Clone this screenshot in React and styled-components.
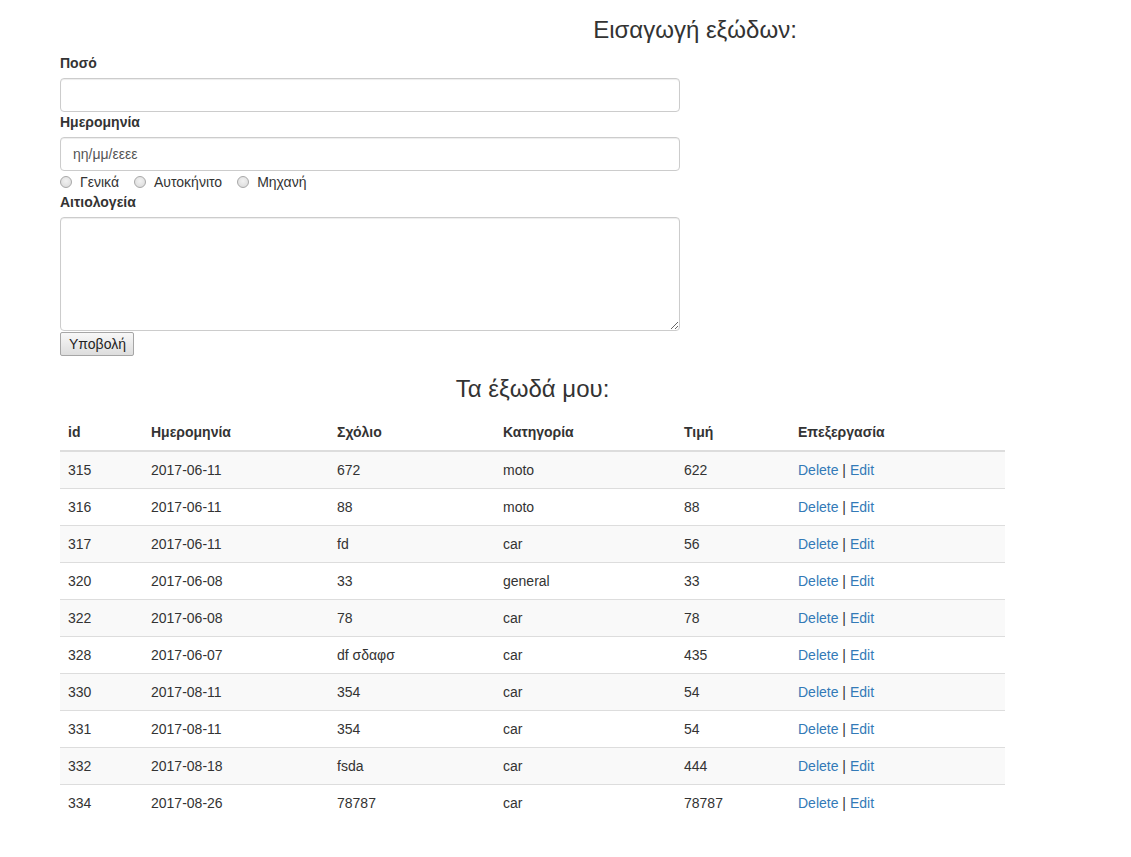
import React from 'react'
import styled, { createGlobalStyle } from 'styled-components'

const GlobalStyle = createGlobalStyle`
    html, body {
        margin: 0;
        padding: 0;
        background: #fff;
    }
    body {
        font-family: "Liberation Sans", Arial, Helvetica, sans-serif;
        font-size: 14px;
        line-height: 20px;
        color: #333;
    }
    * {
        box-sizing: border-box;
    }
`

const Page = styled.div`
    width: 945px;
    margin-left: 60px;
    padding-bottom: 30px;
`

const Title = styled.h3`
    margin: ${props => (props.first ? '17px' : '20px')} 0 10px;
    padding-left: ${props => props.shift || 0}px;
    font-size: 24px;
    font-weight: 500;
    line-height: 26px;
    text-align: center;
    color: #333;
`

const Form = styled.form`
    width: 620px;
`

const Label = styled.label`
    display: inline-block;
    margin-bottom: 5px;
    font-weight: bold;
`

const Input = styled.input`
    display: block;
    width: 100%;
    height: 34px;
    padding: 6px 12px;
    font-family: inherit;
    font-size: 14px;
    color: #555;
    background: #fff;
    border: 1px solid #ccc;
    border-radius: 4px;
    box-shadow: inset 0 1px 1px rgba(0, 0, 0, 0.075);
    outline: none;
    &::placeholder {
        color: #555;
    }
`

const Textarea = styled.textarea`
    display: block;
    width: 100%;
    height: 114px;
    padding: 6px 12px;
    font-family: inherit;
    font-size: 14px;
    border: 1px solid #ccc;
    border-radius: 4px;
    box-shadow: inset 0 1px 1px rgba(0, 0, 0, 0.075);
    outline: none;
    resize: vertical;
`

const RadioRow = styled.div`
    display: flex;
    align-items: center;
    height: 20px;
    margin-top: 1px;
`

const RadioLabel = styled.label`
    display: flex;
    align-items: center;
    margin-right: 15px;
    color: #333;
`

const Radio = styled.input`
    appearance: none;
    width: 12px;
    height: 12px;
    margin: 0 8px 0 0;
    border: 1px solid #a8a8a8;
    border-radius: 50%;
    background: radial-gradient(circle at 50% 40%, #f2f2f2 0%, #d8d8d8 100%);
`

const Submit = styled.button`
    display: block;
    margin-top: 1px;
    height: 24px;
    padding: 0 7px 0 8px;
    font-family: inherit;
    font-size: 14px;
    color: #222;
    border: 1px solid #a6a6a6;
    border-radius: 2px;
    background: linear-gradient(#f8f8f8, #dddddd);
`

const Table = styled.table`
    width: 100%;
    border-collapse: collapse;
    border-spacing: 0;
`

const Th = styled.th`
    padding: 10px 8px 8px;
    text-align: left;
    font-weight: bold;
    line-height: 20px;
    border-bottom: 2px solid #ddd;
    width: ${props => props.w}px;
`

const Row = styled.tr`
    background: ${props => (props.striped ? '#f9f9f9' : '#fff')};
`

const Td = styled.td`
    padding: 8px;
    line-height: 20px;
    height: 37px;
    border-top: ${props => (props.first ? 'none' : '1px solid #ddd')};
`

const Link = styled.a`
    color: #337ab7;
    text-decoration: none;
`

const columns = [
    { name: 'id', w: 83 },
    { name: 'Ημερομηνία', w: 186 },
    { name: 'Σχόλιο', w: 166 },
    { name: 'Κατηγορία', w: 181 },
    { name: 'Τιμή', w: 114 },
    { name: 'Επεξεργασία', w: 215 },
]

const expenses = [
    [315, '2017-06-11', '672', 'moto', '622'],
    [316, '2017-06-11', '88', 'moto', '88'],
    [317, '2017-06-11', 'fd', 'car', '56'],
    [320, '2017-06-08', '33', 'general', '33'],
    [322, '2017-06-08', '78', 'car', '78'],
    [328, '2017-06-07', 'df σδαφσ', 'car', '435'],
    [330, '2017-08-11', '354', 'car', '54'],
    [331, '2017-08-11', '354', 'car', '54'],
    [332, '2017-08-18', 'fsda', 'car', '444'],
    [334, '2017-08-26', '78787', 'car', '78787'],
]

const App = () => (
    <Page>
        <GlobalStyle />
        <Title first shift={325}>Εισαγωγή εξώδων:</Title>
        <Form onSubmit={e => e.preventDefault()}>
            <Label>Ποσό</Label>
            <Input type="text" />
            <Label>Ημερομηνία</Label>
            <Input type="text" placeholder="ηη/μμ/εεεε" />
            <RadioRow>
                <RadioLabel><Radio type="radio" name="cat" />Γενικά</RadioLabel>
                <RadioLabel><Radio type="radio" name="cat" />Αυτοκήνιτο</RadioLabel>
                <RadioLabel><Radio type="radio" name="cat" />Μηχανή</RadioLabel>
            </RadioRow>
            <Label>Αιτιολογεία</Label>
            <Textarea />
            <Submit type="submit">Υποβολή</Submit>
        </Form>
        <Title>Τα έξωδά μου:</Title>
        <Table>
            <thead>
                <tr>
                    {columns.map(c => (
                        <Th key={c.name} w={c.w}>{c.name}</Th>
                    ))}
                </tr>
            </thead>
            <tbody>
                {expenses.map((r, i) => (
                    <Row key={r[0]} striped={i % 2 === 0}>
                        {r.map((v, j) => (
                            <Td key={j} first={i === 0}>{v}</Td>
                        ))}
                        <Td first={i === 0}>
                            <Link href="#">Delete</Link> | <Link href="#">Edit</Link>
                        </Td>
                    </Row>
                ))}
            </tbody>
        </Table>
    </Page>
)

export default App
